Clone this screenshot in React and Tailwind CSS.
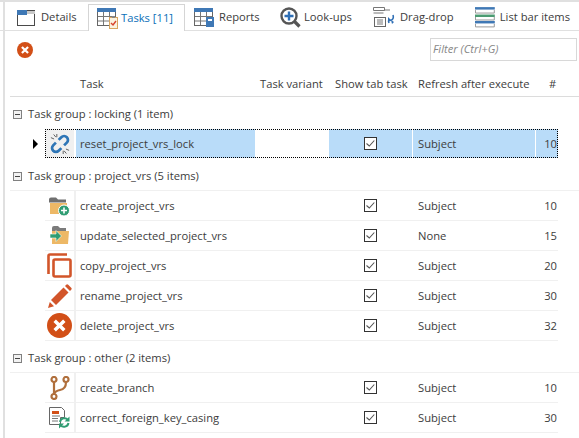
import React from 'react';

const Details = () => (
  <svg width="19" height="19" viewBox="0 0 19 19">
    <rect x="0.5" y="2.5" width="17" height="15" fill="#fff" stroke="#4a4a4a" />
    <rect x="0" y="2" width="10" height="5" fill="#3f78b5" />
    <rect x="10" y="3" width="8" height="3" fill="#c8c8c8" />
  </svg>
);

const GridLines = () => (
  <>
    <rect x="0.5" y="1.5" width="18" height="17" fill="#fff" stroke="#666" />
    <rect x="0" y="1" width="19" height="4" fill="#3f78b5" />
    <path d="M6.5 5v13M12.5 5v13M1 9.5h17M1 14h17" stroke="#777" />
  </>
);

const TasksIcon = () => (
  <svg width="22" height="23" viewBox="0 0 22 23">
    <GridLines />
    <rect x="12.5" y="10.5" width="8" height="11" fill="#fbf2de" stroke="#d9a55e" />
    <rect x="15" y="9" width="3" height="2" fill="#888" />
    <path d="M14 16l2 2 3-4" fill="none" stroke="#d8432c" strokeWidth="1.4" />
  </svg>
);

const ReportsIcon = () => (
  <svg width="21" height="21" viewBox="0 0 21 21">
    <GridLines />
    <rect x="12" y="10" width="8" height="10" fill="#3f78b5" />
    <rect x="14" y="12" width="4" height="2" fill="#fff" />
  </svg>
);

const LookupIcon = () => (
  <svg width="21" height="21" viewBox="0 0 21 21">
    <circle cx="9" cy="9" r="7.5" fill="#fff" stroke="#555" strokeWidth="2.4" />
    <path d="M14.5 14.5l5 5" stroke="#555" strokeWidth="3.2" />
    <path d="M9 4.5v9M4.5 9h9" stroke="#2f6fb5" strokeWidth="2.4" />
  </svg>
);

const DragIcon = () => (
  <svg width="23" height="21" viewBox="0 0 23 21">
    <path d="M0.5 0.5h11v3h-11zM11 3h6M0.5 6h10" fill="#fff" stroke="#777" />
    <rect x="1.5" y="10.5" width="11" height="9" fill="#fff" stroke="#666" />
    <path d="M4 13h6M4 15h6M4 17h6" stroke="#777" />
    <path d="M20 8c1 3 0 5-3 5.5M16 16c-1-2 0-3 1-3.500" fill="none" stroke="#2f6fb5" strokeWidth="1.6" />
    <path d="M15 10l3 3-3 2zM21 15l-3-2 1 4z" fill="#2f6fb5" />
  </svg>
);

const ListBarIcon = () => (
  <svg width="21" height="21" viewBox="0 0 21 21">
    <rect x="0" y="0" width="20" height="2.500" fill="#3f78b5" />
    <path d="M0.5 3v3h19V3" fill="none" stroke="#999" />
    <rect x="0" y="7.500" width="20" height="2.500" fill="#4b9b72" />
    <path d="M0.5 10v3h19v-3" fill="none" stroke="#999" />
    <rect x="0" y="14" width="20" height="2.500" fill="#3f78b5" />
    <path d="M0.5 17v3h19v-3" fill="none" stroke="#999" />
  </svg>
);

const CloseCircle = ({ size }) => (
  <svg width={size} height={size} viewBox="0 0 26 26">
    <circle cx="13" cy="13" r="13" fill="#d24f17" />
    <path d="M8 8l10 10M18 8L8 18" stroke="#fff" strokeWidth="3.600" />
  </svg>
);

const LinkBroken = () => (
  <svg width="20" height="20" viewBox="0 0 22 22">
    <path d="M9.500 6.500l3-3a4 4 0 0 1 6 6l-3 3" fill="none" stroke="#2e75b6" strokeWidth="3" />
    <path d="M12.500 15.500l-3 3a4 4 0 0 1-6-6l3-3" fill="none" stroke="#2e75b6" strokeWidth="3" />
    <path d="M4 0.500l2.500 3M1 4l3.500 1.500M7.500 0v3.500M18 21.500l-2.500-3M21 18l-3.500-1.500M14.500 22v-3.500" stroke="#555" strokeWidth="1" />
  </svg>
);

const FolderAdd = () => (
  <svg width="21" height="22" viewBox="0 0 21 22">
    <path d="M0 4.500q0-2 2-2h5l2 2h8v3H0z" fill="#6f6f6f" />
    <path d="M1 19V8h17v11z" fill="#edb866" />
    <circle cx="15" cy="15.500" r="5.500" fill="#2f9d73" stroke="#fff" />
    <path d="M15 12.500v6M12 15.500h6" stroke="#fff" strokeWidth="1.600" />
  </svg>
);

const FolderMove = () => (
  <svg width="20" height="19" viewBox="0 0 20 19">
    <path d="M2 2q0-2 2-2h4l2 2h6v3H2z" fill="#7b7b7b" />
    <path d="M2 18V5h17l-1 13z" fill="#edb866" />
    <path d="M0 8h6V4.500L11.500 10 6 15.500V12H0z" fill="#2f9d73" stroke="#fff" strokeWidth="0.600" />
  </svg>
);

const CopyIcon = () => (
  <svg width="25" height="25" viewBox="0 0 25 25">
    <path d="M1.500 21V3q0-1.500 1.500-1.500h17" fill="none" stroke="#d2552a" strokeWidth="2.600" />
    <rect x="6.500" y="6.500" width="17" height="17" rx="1.500" fill="#fff" stroke="#d2552a" strokeWidth="2.600" />
  </svg>
);

const PencilIcon = () => (
  <svg width="24" height="24" viewBox="0 0 24 24">
    <path d="M0 24l1.800-6 4.200 4.200z" fill="#d2552a" />
    <path d="M3 16L15.500 3.500 20.500 8.500 8 21z" fill="#d2552a" />
    <path d="M17 2l1.200-1.200q1-1 2 0l3 3q1 1 0 2L22 7z" fill="#d2552a" />
  </svg>
);

const BranchIcon = () => (
  <svg width="20" height="24" viewBox="0 0 20 24">
    <g fill="none" stroke="#b06f3c" strokeWidth="2.200">
      <circle cx="4" cy="3.500" r="2.500" />
      <circle cx="16" cy="3.500" r="2.500" />
      <circle cx="4" cy="20.500" r="2.500" />
      <path d="M4 6v12M16 6q0 7-6 8-5 1-6 4" />
    </g>
  </svg>
);

const CasingIcon = () => (
  <svg width="21" height="22" viewBox="0 0 21 22">
    <path d="M0.500 0.500h12l3 3v7h-4v7h-11z" fill="#fff" stroke="#666" />
    <rect x="3" y="4" width="7" height="3" fill="#d24f17" />
    <path d="M3 9h8M3 11.500h6M3 14h6" stroke="#777" />
    <path d="M11 15a4.500 4.500 0 0 1 8-2M19.500 16a4.500 4.500 0 0 1-8 2" fill="none" stroke="#2f9d73" strokeWidth="2" />
    <path d="M20.500 9.500v5h-5zM10 21.500v-5h5z" fill="#2f9d73" />
  </svg>
);

const Check = () => (
  <span className="flex h-[13px] w-[13px] items-center justify-center border border-[#333] bg-white">
    <svg width="11" height="11" viewBox="0 0 11 11">
      <path d="M1.500 5.500l2.800 2.500 5-5.500" fill="none" stroke="#555" strokeWidth="1.100" />
    </svg>
  </span>
);

const tabs = [
  { label: 'Details', icon: <Details />, width: 'w-[76px] pl-[5px]', gap: 'gap-[5px]' },
  { label: 'Tasks [11]', icon: <TasksIcon />, active: true, width: 'w-[97px] pl-[8px]', gap: 'gap-[2px]' },
  { label: 'Reports', icon: <ReportsIcon />, width: 'w-[95px] pl-[9px]', gap: 'gap-[4px]' },
  { label: 'Look-ups', icon: <LookupIcon />, width: 'w-[93px]', gap: 'gap-[3px]' },
  { label: 'Drag-drop', icon: <DragIcon />, width: 'w-[102px]', gap: 'gap-[4px]' },
  { label: 'List bar items', icon: <ListBarIcon />, width: 'w-[95px]', gap: 'gap-[4px]' },
];

const groups = [
  {
    title: 'Task group : locking (1 item)',
    rows: [{ name: 'reset_project_vrs_lock', icon: <LinkBroken />, refresh: 'Subject', num: 10, selected: true }],
  },
  {
    title: 'Task group : project_vrs (5 items)',
    rows: [
      { name: 'create_project_vrs', icon: <FolderAdd />, refresh: 'Subject', num: 10 },
      { name: 'update_selected_project_vrs', icon: <FolderMove />, refresh: 'None', num: 15 },
      { name: 'copy_project_vrs', icon: <CopyIcon />, refresh: 'Subject', num: 20 },
      { name: 'rename_project_vrs', icon: <PencilIcon />, refresh: 'Subject', num: 30 },
      { name: 'delete_project_vrs', icon: <CloseCircle size={25} />, refresh: 'Subject', num: 32 },
    ],
  },
  {
    title: 'Task group : other (2 items)',
    rows: [
      { name: 'create_branch', icon: <BranchIcon />, refresh: 'Subject', num: 10 },
      { name: 'correct_foreign_key_casing', icon: <CasingIcon />, refresh: 'Subject', num: 30 },
    ],
  },
];

const Row = ({ row }) => {
  const sel = row.selected;
  const fill = sel ? 'bg-[#b9dcf9]' : '';
  return (
    <div
      className={`flex w-[513px] items-center ${
        sel ? 'h-[29px] outline-1 -outline-offset-1 outline-dotted outline-black' : 'h-[30px] border-b border-[#f0f0f0]'
      }`}
    >
      <div className={`flex h-full w-[31px] items-center justify-center border-r-2 ${sel ? 'border-white bg-[#f0f0f0]' : 'border-[#f0f0f0]'}`}>
        {row.icon}
      </div>
      <div className={`flex h-full w-[179px] items-center pl-[4px] pt-[2px] ${fill}`}>{row.name}</div>
      <div className="h-full w-[74px]" />
      <div className={`flex h-full w-[84px] items-center justify-center border-r border-white ${fill}`}>
        <Check />
      </div>
      <div className={`flex h-full w-[123px] items-center border-r border-white pl-[5px] pt-[2px] ${fill}`}>{row.refresh}</div>
      <div className={`flex h-full w-[22px] items-center justify-end pr-[1px] pt-[2px] ${fill}`}>{row.num}</div>
    </div>
  );
};

export default function App() {
  return (
    <div className="h-[438px] w-[579px] overflow-hidden bg-white font-['Open_Sans',sans-serif] text-[11.2px] text-[#3c3c3c]">
      <div className="flex h-[31px] items-end border-t-2 border-b border-[#e0e0e0]">
        <div className="ml-[3px] flex h-full items-end border-l-2 border-[#e0e0e0] pl-[7px]">
          {tabs.map((tab) => (
            <div
              key={tab.label}
              className={`flex shrink-0 items-center whitespace-nowrap ${tab.width} ${tab.gap} ${
                tab.active
                  ? '-mb-px h-[27px] border border-b-0 border-[#d5d5d5] bg-white text-[#0b6fb8]'
                  : 'h-[26px]'
              }`}
            >
              {tab.icon}
              <span>{tab.label}</span>
            </div>
          ))}
        </div>
      </div>

      <div className="ml-[3px] h-[407px] border-l-2 border-[#e0e0e0] pl-[5px]">
        <div className="flex h-[37px] items-center justify-between pr-[2px]">
          <div className="pl-[7px]">
            <CloseCircle size={16} />
          </div>
          <div className="flex h-[23px] w-[147px] items-center border border-[#d8d8d8] pl-[2px] text-[#888] italic">
            Filter (Ctrl+G)
          </div>
        </div>

        <div className="flex h-[29px] items-center border-b border-[#dcdcdc] pt-[5px]">
          <div className="w-[70px]" />
          <div className="w-[180px]">Task</div>
          <div className="w-[75px]">Task variant</div>
          <div className="w-[83px]">Show tab task</div>
          <div className="w-[131px]">Refresh after execute</div>
          <div>#</div>
        </div>

        {groups.map((group) => (
          <div key={group.title}>
            <div className="flex h-[31px] items-center gap-[6px] pl-[3px] pt-[4px]">
              <span className="flex h-[9px] w-[9px] items-center justify-center border border-[#808080] bg-[#f2f2f2]">
                <span className="h-px w-[5px] bg-[#444]" />
              </span>
              <span>{group.title}</span>
            </div>
            <div
              className={`pl-[35px] ${
                group.rows[0].selected ? 'relative border-y border-transparent' : 'border-t border-[#f0f0f0]'
              }`}
            >
              {group.rows[0].selected && (
                <span className="absolute top-[10px] left-[23px] h-0 w-0 border-y-[5px] border-l-[5px] border-y-transparent border-l-black" />
              )}
              {group.rows.map((row) => (
                <Row key={row.name} row={row} />
              ))}
            </div>
          </div>
        ))}
      </div>
    </div>
  );
}
